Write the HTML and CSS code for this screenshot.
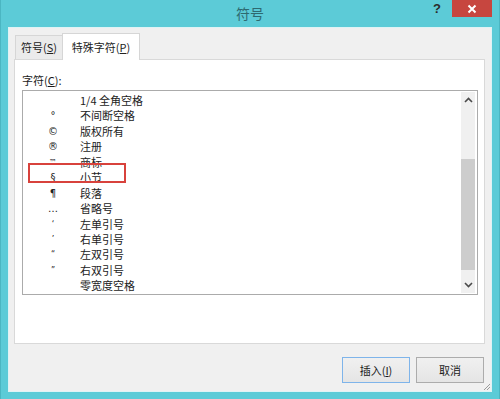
FILE: index.html
```html
<!DOCTYPE html>
<html lang="zh-CN">

<head>
    <meta charset="UTF-8">
    <meta name="viewport" content="width=device-width, initial-scale=1.0">
    <title>符号</title>
    <link rel="stylesheet" href="styles.css">
</head>

<body>
    <div class="window">
        <div class="titlebar">
            <div></div>
            <div class="title">符号</div>
            <div class="controls">
                <span class="help">?</span>
                <span class="close">
                    <svg width="10" height="10" viewBox="0 0 10 10">
                        <path d="M1.5 1.5 L8.5 8.5 M8.5 1.5 L1.5 8.5" stroke="#fff" stroke-width="2" />
                    </svg>
                </span>
            </div>
        </div>

        <div class="client">
            <div class="tabs">
                <div class="tab">符号(<u>S</u>)</div>
                <div class="tab active">特殊字符(<u>P</u>)</div>
            </div>

            <div class="panel">
                <div class="label">字符(<u>C</u>):</div>
                <div class="listbox">
                    <ul class="items">
                        <li><span class="sym"></span><span>1/4 全角空格</span></li>
                        <li><span class="sym">°</span><span>不间断空格</span></li>
                        <li><span class="sym">©</span><span>版权所有</span></li>
                        <li><span class="sym">®</span><span>注册</span></li>
                        <li><span class="sym small">™</span><span>商标</span></li>
                        <li><span class="sym">§</span><span>小节</span></li>
                        <li><span class="sym">¶</span><span>段落</span></li>
                        <li><span class="sym">…</span><span>省略号</span></li>
                        <li><span class="sym small">‘</span><span>左单引号</span></li>
                        <li><span class="sym small">’</span><span>右单引号</span></li>
                        <li><span class="sym small">“</span><span>左双引号</span></li>
                        <li><span class="sym small">”</span><span>右双引号</span></li>
                        <li><span class="sym"></span><span>零宽度空格</span></li>
                    </ul>
                    <div class="scrollbar">
                        <div class="arrow">
                            <svg width="9" height="6" viewBox="0 0 9 6">
                                <path d="M1 5 L4.5 1.5 L8 5" fill="none" stroke="#4a4a4a" stroke-width="1.6" />
                            </svg>
                        </div>
                        <div class="track">
                            <div class="thumb"></div>
                        </div>
                        <div class="arrow">
                            <svg width="9" height="6" viewBox="0 0 9 6">
                                <path d="M1 1 L4.5 4.5 L8 1" fill="none" stroke="#4a4a4a" stroke-width="1.6" />
                            </svg>
                        </div>
                    </div>
                </div>
            </div>

            <div class="footer">
                <button class="btn default">插入(<u>I</u>)</button>
                <button class="btn">取消</button>
            </div>

            <div class="grip">
                <svg width="8" height="8" viewBox="0 0 8 8">
                    <path d="M7 1 L1 7 M7 4 L4 7" stroke="#9a9a9a" stroke-width="1" />
                </svg>
            </div>
        </div>

        <!-- annotation over the list -->
        <div class="highlight"></div>
    </div>
</body>

</html>
```

FILE: styles.css
```css
* {
    margin: 0;
    padding: 0;
    box-sizing: border-box;
}

body {
    width: 500px;
    height: 399px;
    overflow: hidden;
    background-color: #5ccbd7;
    font-family: "Noto Sans CJK SC", "Noto Sans", sans-serif;
    font-size: 11px;
    color: #1a1a1a;
}

.window {
    position: relative;
    width: 500px;
    height: 399px;
    display: flex;
    flex-direction: column;
    border-left: 1px solid #4bb6c2;
    border-right: 1px solid #4bb6c2;
}

/* title bar */
.titlebar {
    height: 27px;
    display: grid;
    grid-template-columns: 1fr auto 1fr;
    align-items: start;
}

.title {
    line-height: 27px;
    font-size: 14px;
    color: #2e6970;
}

.controls {
    display: flex;
    justify-content: flex-end;
    align-items: flex-start;
    padding-right: 7px;
}

.help {
    font-family: "Liberation Sans", sans-serif;
    font-weight: bold;
    font-size: 13px;
    line-height: 17px;
    color: #2b2b2b;
    margin-right: 11px;
}

.close {
    width: 40px;
    height: 17px;
    background-color: #c7463f;
    display: flex;
    justify-content: center;
    align-items: center;
}

/* client area */
.client {
    position: relative;
    height: 365px;
    margin: 0 7px 0 7px;
    background-color: #f0f0f0;
    border: 1px solid #dff3f5;
    padding: 5px 6px 0 5px;
}

.tabs {
    display: flex;
    align-items: flex-end;
    height: 26px;
    padding-left: 1px;
}

.tab {
    height: 24px;
    width: 48px;
    border: 1px solid #d6d6d6;
    border-bottom: none;
    background-color: #ebebeb;
    line-height: 22px;
    text-align: center;
    color: #222;
}

.tab.active {
    position: relative;
    height: 27px;
    width: 78px;
    margin-left: -1px;
    margin-bottom: -1px;
    background-color: #fff;
    line-height: 26px;
    z-index: 1;
}

.panel {
    height: 285px;
    background-color: #fff;
    border: 1px solid #d9d9d9;
    padding: 11px 6px 0 7px;
}

.label {
    height: 18px;
    line-height: 18px;
    margin-bottom: 1px;
}

.listbox {
    display: flex;
    height: 205px;
    border: 1px solid #ababab;
}

.items {
    flex: 1;
    list-style: none;
    padding-top: 2px;
}

.items li {
    display: grid;
    grid-template-columns: 57px 1fr;
    height: 15.45px;
    line-height: 15.45px;
    color: #222;
}

.sym {
    text-align: center;
    padding-left: 3px;
    font-family: "DejaVu Sans", sans-serif;
    font-size: 10px;
}

.sym.small {
    font-size: 8px;
}

.scrollbar {
    width: 14px;
    margin: 1px 2px 1px 0;
    display: flex;
    flex-direction: column;
    background-color: #f0f0f0;
}

.arrow {
    height: 16px;
    display: flex;
    justify-content: center;
    align-items: center;
}

.track {
    flex: 1;
    padding-top: 51px;
}

.thumb {
    height: 111px;
    background-color: #cdcdcd;
}

/* buttons */
.footer {
    display: flex;
    justify-content: flex-end;
    gap: 6px;
    margin-top: 13px;
    padding-right: 1px;
}

.btn {
    width: 68px;
    height: 26px;
    font-family: inherit;
    font-size: 11px;
    color: #1a1a1a;
    background: linear-gradient(#f0f0f0, #e5e5e5);
    border: 1px solid #acacac;
}

.btn.default {
    border-color: #7eb4ea;
}

.grip {
    position: absolute;
    right: 0;
    bottom: 0;
    line-height: 0;
}

/* red annotation box */
.highlight {
    position: absolute;
    left: 27px;
    top: 163px;
    width: 98px;
    height: 20px;
    border: 2px solid #d8423c;
}
```
